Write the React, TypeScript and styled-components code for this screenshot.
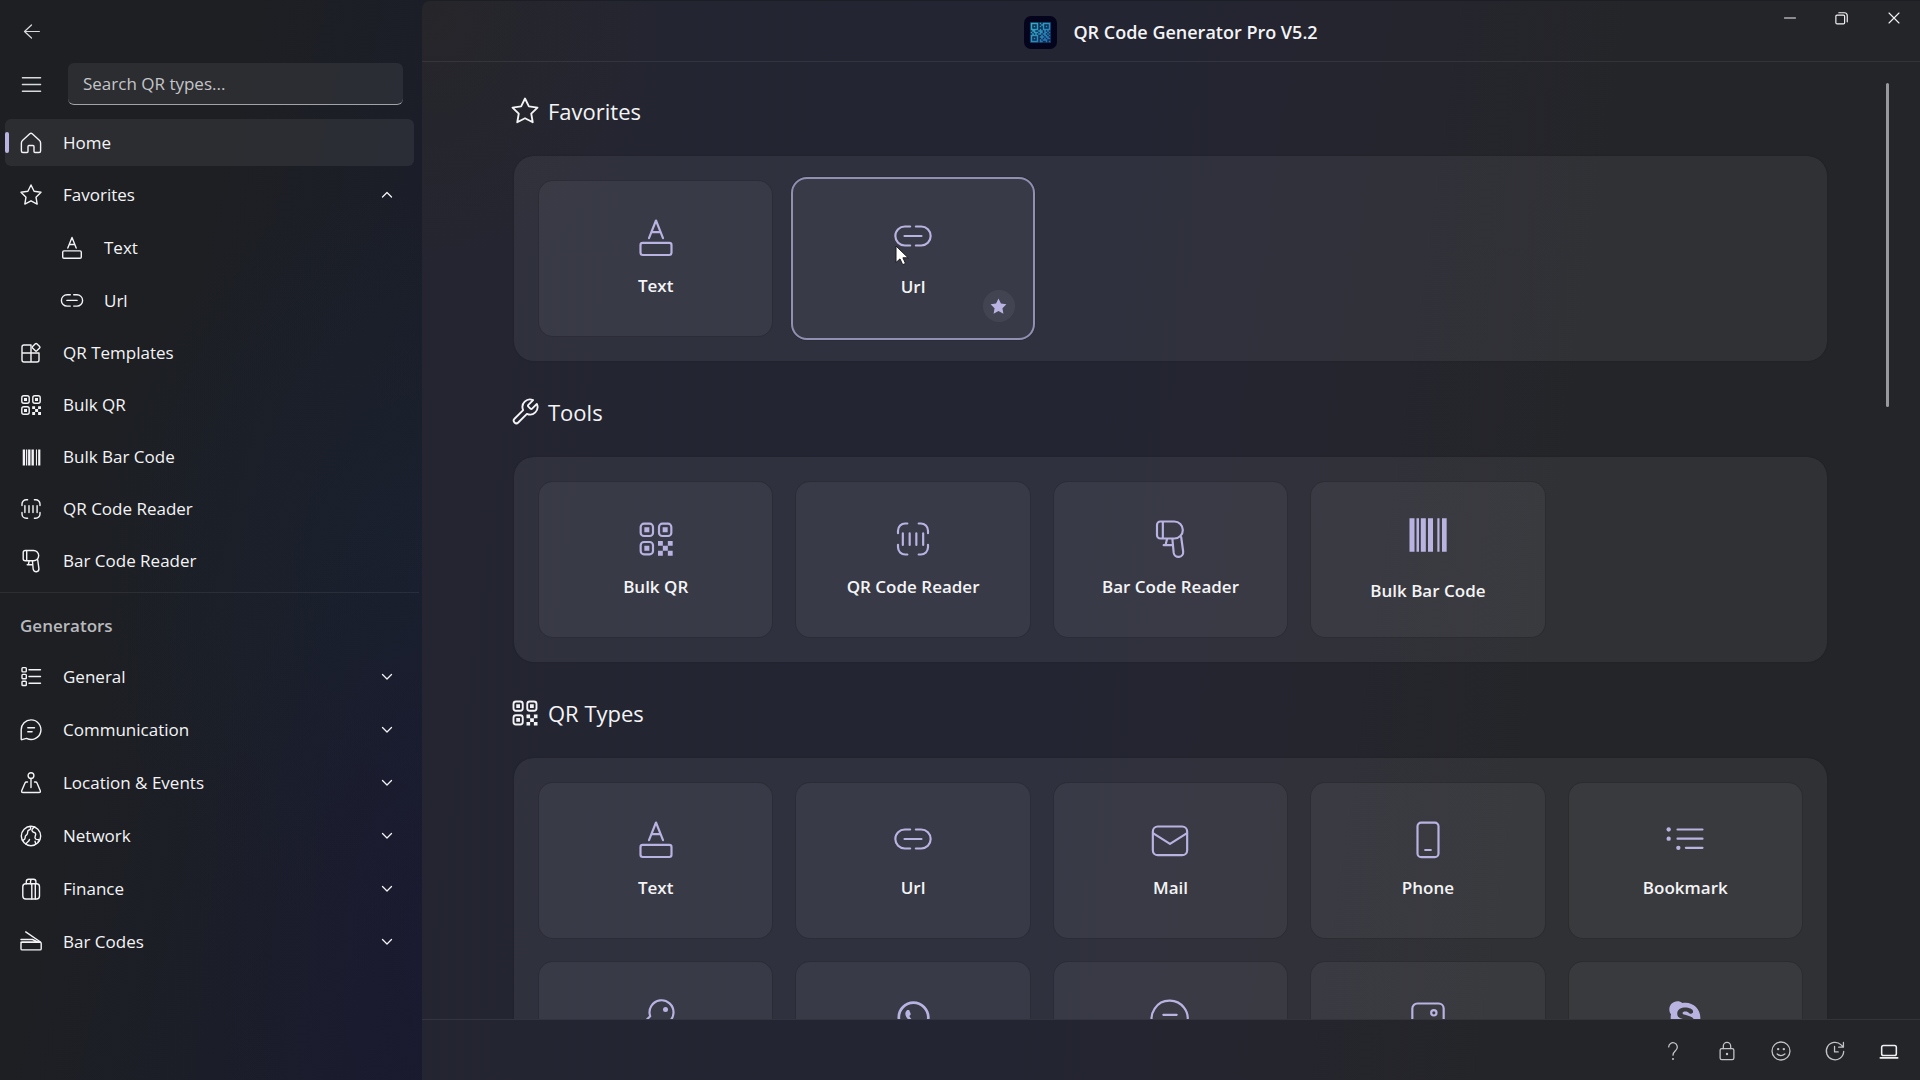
import React from "react";
import styled, { createGlobalStyle, css } from "styled-components";
import { FaSkype, FaWhatsapp } from "react-icons/fa";

const accent = "#b9b3e2";
const hairline = "rgba(255, 255, 255, 0.07)";

const GlobalStyle = createGlobalStyle`
  *, *::before, *::after { box-sizing: border-box; }
  body {
    margin: 0;
    background: #1c1e25;
    color: #f4f4f6;
    font-family: "Open Sans", "Noto Sans", sans-serif;
    font-size: 17px;
    line-height: 24px;
  }
  button, input { font: inherit; color: inherit; }
  button { background: none; border: 0; padding: 0; cursor: default; }
  ul { list-style: none; margin: 0; padding: 0; }
  h1, h2 { margin: 0; }
`;

/* ---------- icons ---------- */

const Svg = styled.svg<{ $size: number; $weight: number }>`
  display: block;
  flex: none;
  width: ${(p) => p.$size}px;
  height: ${(p) => p.$size}px;
  fill: none;
  stroke: currentColor;
  stroke-width: ${(p) => p.$weight};
  stroke-linecap: round;
  stroke-linejoin: round;

  .solid {
    fill: currentColor;
    stroke: none;
  }
`;

const star =
  "M12 2l3.09 6.26L22 9.27l-5 4.87 1.18 6.88L12 17.77l-6.18 3.25L7 14.14 2 9.27l6.91-1.01z";

const glyphs = {
  back: <path d="M21 12H4M12 4.5L4 12l8 7.5" />,
  menu: <path d="M2.5 5h19M2.5 12h19M2.5 19h19" />,
  home: (
    <path d="M10.8 2.8L3.7 9.2q-1.3 1.2-1.3 2.8v8a1.5 1.5 0 0 0 1.5 1.5H8a1 1 0 0 0 1-1v-5a1 1 0 0 1 1-1h4a1 1 0 0 1 1 1v5a1 1 0 0 0 1 1h4.1a1.5 1.5 0 0 0 1.5-1.5v-8q0-1.6-1.3-2.8L13.2 2.8q-1.2-1-2.4 0z" />
  ),
  star: <path d={star} />,
  starSolid: <path className="solid" d={star} />,
  text: (
    <>
      <path d="M7.8 12.1L12 1.5l4.2 10.6M9.3 8.5h5.4" />
      <rect x="2.7" y="14.9" width="18.6" height="7.3" rx="1.3" />
    </>
  ),
  link: (
    <path d="M10.3 5.7H7.1a5.7 5.7 0 0 0 0 11.4h3.2M13.7 5.7h3.2a5.7 5.7 0 0 1 0 11.4h-3.2M6.9 11.4h10.2" />
  ),
  templates: (
    <>
      <path d="M12 4H5a2 2 0 0 0-2 2v13a2 2 0 0 0 2 2h13a2 2 0 0 0 2-2v-7H3M12 4v17" />
      <rect x="14.1" y="3.3" width="6" height="6" rx="1" transform="rotate(45 17.1 6.3)" />
    </>
  ),
  qr: (
    <>
      <rect x="2.8" y="2.8" width="7.4" height="7.4" rx="2" />
      <rect x="13.8" y="2.8" width="7.4" height="7.4" rx="2" />
      <rect x="2.8" y="13.8" width="7.4" height="7.4" rx="2" />
      <path
        className="solid"
        d="M5 5h3v3H5zM16 5h3v3h-3zM5 16h3v3H5zM13.2 13.2h2.9v2.9h-2.9zM19.1 13.2H22v2.9h-2.9zM16.1 16.1h3v3h-3zM13.2 19.1h2.9V22h-2.9zM19.1 19.1H22V22h-2.9z"
      />
    </>
  ),
  bars: (
    <path
      className="solid"
      d="M.9 2h3v20h-3zM5.1 2h1.5v20H5.1zM7.7 2h3v20h-3zM12 2h3v20h-3zM17.6 2h1.3v20h-1.3zM20.4 2h2.8v20h-2.8z"
    />
  ),
  qrReader: (
    <path d="M3 8.5V7a4.3 4.3 0 0 1 4.3-4.3h1.3M15.4 2.7h1.3A4.3 4.3 0 0 1 21 7v1.5M21 15.5V17a4.3 4.3 0 0 1-4.3 4.3h-1.3M8.6 21.3H7.3A4.3 4.3 0 0 1 3 17v-1.5M5.9 8.6v7M10 8.6v7M14 8.6v7M18.1 8.6v7" />
  ),
  barReader: (
    <path d="M6.2 1.5h8.4a5.1 5.1 0 0 1 0 10.2H6.2a2 2 0 0 1-2-2V3.5a2 2 0 0 1 2-2zM7.7 1.5v10.2M13.4 11.7l.8 8.5a2.8 2.8 0 0 0 5.7-.7L18.7 10.8M10.3 11.7l-1 4M8.2 15.7h5.4" />
  ),
  list: (
    <>
      <rect x="3" y="2.6" width="4.3" height="4.3" rx=".8" />
      <rect x="3" y="9.4" width="4.3" height="4.3" rx=".8" />
      <rect x="3" y="16.2" width="4.3" height="4.3" rx=".8" />
      <path d="M10 4.7h11.5M10 11.5h11.5M10 18.3h11.5" />
    </>
  ),
  chat: (
    <path d="M12 1.9a9.8 9.8 0 1 1-4.4 18.5l-4.7 1.3a.6.6 0 0 1-.7-.7V11.7A9.8 9.8 0 0 1 12 1.9zM8.8 9.7h6.7M8.8 13.8h4.3" />
  ),
  location: (
    <>
      <circle cx="12" cy="4.6" r="2.9" />
      <path d="M12 7.5v9M8.5 11H7.4q-1 0-1.4 1l-3.2 7.6q-.7 1.9 1.2 1.9h16q1.9 0 1.2-1.9L18 12q-.4-1-1.4-1h-1.1" />
    </>
  ),
  globe: (
    <>
      <circle cx="12" cy="12" r="9.7" />
      <path d="M11 2.4c1 1.6 1 3-1 3.6-2.5.8-.5 3-2 4.500S6 11.500 6.200 13.500 4.500 16 3.500 16.500M7 20.300c.5-2 3-2.500 3.500-4.800M15.500 3c-2 1.500-3.500 3-2 4.500s3 .5 3.200 2.500-2 3.500 0 5 2.500 0 3.300.7-.2 1.800-1 2.300M16.500 20.300c.3-1.300-.2-2-.5-3" />
    </>
  ),
  bag: (
    <>
      <rect x="3.8" y="6.7" width="16.7" height="15.3" rx="3" />
      <path d="M7.3 6.7V4.5A2.3 2.3 0 0 1 9.6 2.2h5a2.3 2.3 0 0 1 2.3 2.3v2.2M11.5 6.7V4.5q0-1.5 1.3-2.3M12.8 6.7V22M16.3 6.7V22" />
    </>
  ),
  scanner: (
    <>
      <path d="M6.7 1.9L21.5 12M2 9.5h11.5l5.5 2.7M2 12.3h19" />
      <rect x="2" y="12.3" width="20.2" height="7.6" rx="1.2" />
    </>
  ),
  wrench: (
    <path d="M14.7 6.3a1 1 0 0 0 0 1.4l1.6 1.6a1 1 0 0 0 1.4 0l3.77-3.77a6 6 0 0 1-7.94 7.94l-6.91 6.91a2.12 2.12 0 0 1-3-3l6.91-6.91a6 6 0 0 1 7.94-7.94l-3.76 3.76z" />
  ),
  mail: (
    <>
      <rect x="1.7" y="3.9" width="20.6" height="17.2" rx="3" />
      <path d="M2 8l10 6.3L22 8" />
    </>
  ),
  phone: (
    <>
      <rect x="5.7" y="1.6" width="12.6" height="20.7" rx="2.2" />
      <path d="M10.3 18h3.4" />
    </>
  ),
  bookmark: (
    <>
      <path d="M7.5 5.7h15M7.5 11.2h15M12.5 16.7h10" />
      <circle className="solid" cx="2.2" cy="5.7" r="1.3" />
      <circle className="solid" cx="2.2" cy="11.2" r="1.3" />
      <circle className="solid" cx="8" cy="16.7" r="1.3" />
    </>
  ),
  key: (
    <>
      <path d="M8.5 10.3l-6.8 7V22h5v-2.8h3v-3h2.6l1.4-1.2A7.2 7.2 0 1 0 8.5 10.3z" />
      <circle className="solid" cx="17.7" cy="6.3" r="1.5" />
    </>
  ),
  message: (
    <path d="M12 1a10.7 10.7 0 1 1-4.8 20.3l-5 1.4a.6.6 0 0 1-.7-.7l.4-6A10.7 10.7 0 0 1 12 1zM8 9.5h8M8 14.5h5" />
  ),
  image: (
    <>
      <rect x="2.6" y="2.7" width="18.8" height="18.8" rx="3" />
      <circle cx="15.5" cy="8.3" r="1.6" />
      <path d="M4 20l8-7 8 7" />
    </>
  ),
  help: (
    <>
      <path d="M7.3 7.6a4.7 4.7 0 1 1 8.2 3.2C13.8 12.5 12 13.5 12 16.5" />
      <circle className="solid" cx="12" cy="20.6" r="1.1" />
    </>
  ),
  lock: (
    <>
      <rect x="4.5" y="9.3" width="15" height="12" rx="1.8" />
      <path d="M8 9.3V6.5a4 4 0 0 1 8 0v2.8" />
      <circle className="solid" cx="12" cy="15.3" r="1.3" />
    </>
  ),
  smile: (
    <>
      <circle cx="12" cy="12" r="9.8" />
      <path d="M7.8 15.2q4.2 3.6 8.4 0" />
      <circle className="solid" cx="8.9" cy="9.9" r="1.3" />
      <circle className="solid" cx="15.1" cy="9.9" r="1.3" />
    </>
  ),
  history: (
    <path d="M21.5 12.5A9.5 9.5 0 1 1 18.7 5.3l2.3 2.4M21.2 2.6v5.2H16M11.5 7v6h4" />
  ),
  laptop: (
    <>
      <rect x="4" y="6" width="16" height="11" rx="2" />
      <path d="M2.5 19.5h19" />
    </>
  ),
  chevronDown: <path d="M3 7l9 9 9-9" />,
  chevronUp: <path d="M3 16l9-9 9 9" />,
  minimize: <path d="M1 12h22" />,
  restore: (
    <path d="M3.5 7h11a2 2 0 0 1 2 2v11a2 2 0 0 1-2 2h-11a2 2 0 0 1-2-2V9a2 2 0 0 1 2-2zM6.5 3h9.500a5 5 0 0 1 5 5v10.500" />
  ),
  close: <path d="M2 2l20 20M22 2L2 22" />,
};

type GlyphName = keyof typeof glyphs;

function Icon({ name, size = 24, weight = 1.4 }: { name: GlyphName; size?: number; weight?: number }) {
  return (
    <Svg viewBox="0 0 24 24" $size={size} $weight={weight} aria-hidden="true">
      {glyphs[name]}
    </Svg>
  );
}

/* ---------- frame ---------- */

const Shell = styled.div`
  display: grid;
  grid-template-columns: 422px minmax(0, 1fr);
  height: 100vh;
  overflow: hidden;
`;

const Sidebar = styled.aside`
  display: flex;
  flex-direction: column;
  min-height: 0;
  overflow: hidden;
  background:
    radial-gradient(ellipse 260px 460px at 106% 88%, rgba(26, 26, 50, 0.8), rgba(26, 26, 50, 0) 100%),
    radial-gradient(ellipse 340px 380px at 100% 52%, rgba(25, 33, 46, 0.85), rgba(25, 33, 46, 0) 100%),
    linear-gradient(103deg, #1d1f23 0%, #1d1f23 38%, #1b1e28 68%, #1a1b2c 100%);
`;

const BackRow = styled.div`
  display: flex;
  height: 63px;
  padding-left: 5px;
`;

const SquareButton = styled.button`
  display: flex;
  align-items: center;
  justify-content: center;
  width: 53px;
  color: #d8d9dc;
`;

const SearchRow = styled.div`
  display: flex;
  gap: 10px;
  height: 42px;
  padding: 0 19px 0 5px;
`;

const SearchInput = styled.input`
  flex: 1;
  min-width: 0;
  padding: 1px 15px 0;
  border: 0;
  border-bottom: 1px solid #a2a3a8;
  border-radius: 6px;
  background: rgba(255, 255, 255, 0.065);
  outline: 0;

  &::placeholder {
    color: #c4c5c9;
    opacity: 1;
  }
`;

const Nav = styled.nav`
  padding-top: 14px;
`;

const NavList = styled.ul<{ $nested?: boolean; $loose?: boolean }>`
  display: grid;
  gap: ${(p) => (p.$nested || p.$loose ? 6 : 5)}px;
  padding: ${(p) => (p.$nested ? "6px 0 0" : "0 8px 0 5px")};
`;

const NavButton = styled.button<{ $active?: boolean; $nested?: boolean }>`
  position: relative;
  display: flex;
  align-items: center;
  gap: 20px;
  width: 100%;
  height: 47px;
  padding: 1px 21px 0 ${(p) => (p.$nested ? 55 : 14)}px;
  border-radius: 6px;
  text-align: left;

  ${(p) =>
    p.$active &&
    css`
      background: rgba(255, 255, 255, 0.065);

      &::before {
        content: "";
        position: absolute;
        left: 0;
        top: 13px;
        width: 4px;
        height: 21px;
        border-radius: 2px;
        background: ${accent};
      }
    `}
`;

const NavGlyph = styled.span`
  display: flex;
  flex: none;
  justify-content: center;
  width: 24px;
`;

const NavText = styled.span`
  flex: 1;
`;

const Divider = styled.hr`
  width: 419px;
  height: 1px;
  margin: 8px 0;
  border: 0;
  background: ${hairline};
`;

const GroupLabel = styled.h2`
  padding: 1px 0 0 20px;
  margin-bottom: 4px;
  color: #b9babe;
  font-size: 17px;
  font-weight: 600;
  line-height: 47px;
`;

/* ---------- main column ---------- */

const Main = styled.main`
  position: relative;
  display: flex;
  flex-direction: column;
  min-height: 0;
  margin-top: 1px;
  border-top-left-radius: 8px;
  background:
    radial-gradient(ellipse 260px 300px at 0% 0%, rgba(38, 38, 41, 0.9), rgba(38, 38, 41, 0) 100%),
    linear-gradient(98deg, #242531 0%, #232532 44%, #25252e 60%, #242528 76%, #242528 100%);
`;

const TitleBar = styled.header`
  display: grid;
  grid-template-columns: 1fr auto 1fr;
  align-items: center;
  height: 61px;
  border-bottom: 1px solid ${hairline};
`;

const Brand = styled.div`
  display: flex;
  grid-column: 2;
  align-items: center;
  gap: 16px;
  padding-top: 2px;
`;

const Title = styled.h1`
  font-size: 18px;
  font-weight: 600;
  line-height: 24px;
`;

const Logo = styled.svg`
  width: 33px;
  height: 33px;
`;

const WindowControls = styled.div`
  display: flex;
  align-self: start;
  justify-self: end;
`;

const WindowButton = styled.button`
  display: flex;
  align-items: center;
  justify-content: center;
  width: 52px;
  height: 33px;
`;

const Content = styled.div`
  flex: 1;
  min-height: 0;
  overflow-y: auto;
  scrollbar-width: none;
  padding: 30px 93px 30px 88px;
`;

const ScrollThumb = styled.div`
  position: absolute;
  top: 82px;
  right: 31px;
  width: 3px;
  height: 324px;
  border-radius: 2px;
  background: #98999c;
`;

const Section = styled.section`
  margin-bottom: 32px;
`;

const SectionHeading = styled.h2`
  display: flex;
  align-items: center;
  gap: 8px;
  height: 38px;
  margin-bottom: 26px;
  font-size: 22px;
  font-weight: 400;
  line-height: 32px;
`;

const Panel = styled.div`
  display: grid;
  grid-template-columns: repeat(5, minmax(0, 1fr));
  gap: 24px;
  margin-left: 4px;
  padding: 25px;
  border-radius: 20px;
  background: rgba(255, 255, 255, 0.06);
  box-shadow: 0 0 2px rgba(0, 0, 0, 0.2);
`;

const CardButton = styled.button<{ $raised?: boolean }>`
  position: relative;
  display: flex;
  flex-direction: column;
  align-items: center;
  justify-content: center;
  gap: 16px;
  height: 155px;
  padding-bottom: 2px;
  border-radius: 14px;
  background: rgba(255, 255, 255, 0.048);
  box-shadow: 0 0 0 1px rgba(0, 0, 0, 0.1);
  font-weight: 600;

  ${(p) =>
    p.$raised &&
    css`
      gap: 18px;
      height: 163px;
      margin: -4px -5px;
      border: 2px solid #918fb2;
      border-radius: 16px;
    `}
`;

const CardGlyph = styled.span<{ $tall?: boolean }>`
  display: flex;
  justify-content: center;
  height: ${(p) => (p.$tall ? 48 : 40)}px;
  color: ${accent};
`;

const CardLabel = styled.span`
  min-height: 24px;
`;

const FavoriteBadge = styled.span`
  position: absolute;
  right: 18px;
  bottom: 16px;
  display: flex;
  align-items: center;
  justify-content: center;
  width: 32px;
  height: 32px;
  border-radius: 50%;
  background: rgba(255, 255, 255, 0.055);
  color: ${accent};
`;

const Pointer = styled.svg`
  position: absolute;
  left: 102px;
  top: 66px;
  width: 15px;
  height: 22px;
`;

const StatusBar = styled.footer`
  display: flex;
  align-items: center;
  justify-content: flex-end;
  flex: none;
  height: 61px;
  padding: 2px 4px 0 0;
  border-top: 1px solid ${hairline};
`;

const StatusButton = styled.button<{ $bright?: boolean }>`
  display: flex;
  align-items: center;
  justify-content: center;
  width: 54px;
  height: 48px;
  color: ${(p) => (p.$bright ? "#f0f0f2" : "#c3c4c7")};
`;

/* ---------- parts ---------- */

interface NavItemProps {
  icon: GlyphName;
  label: string;
  active?: boolean;
  nested?: boolean;
  expanded?: boolean;
  children?: React.ReactNode;
}

function NavItem({ icon, label, active, nested, expanded, children }: NavItemProps) {
  return (
    <li>
      <NavButton
        type="button"
        $active={active}
        $nested={nested}
        aria-current={active ? "page" : undefined}
        aria-expanded={expanded}
      >
        <NavGlyph>
          <Icon name={icon} size={icon === "bars" ? 19 : 24} />
        </NavGlyph>
        <NavText>{label}</NavText>
        {expanded !== undefined && (
          <Icon name={expanded ? "chevronUp" : "chevronDown"} size={12} weight={2.6} />
        )}
      </NavButton>
      {children}
    </li>
  );
}

interface CardData {
  name: string;
  label?: string;
  icon?: GlyphName;
  brand?: React.ReactNode;
  raised?: boolean;
}

function Card({ name, label, icon, brand, raised }: CardData) {
  return (
    <CardButton type="button" $raised={raised} aria-label={name}>
      <CardGlyph $tall={icon === "bars"}>{icon ? <Icon name={icon} size={40} weight={1.3} /> : brand}</CardGlyph>
      <CardLabel>{label}</CardLabel>
      {raised && (
        <>
          <FavoriteBadge>
            <Icon name="starSolid" size={19} />
          </FavoriteBadge>
          <Pointer viewBox="0 0 15 22" aria-hidden="true">
            <path
              d="M1 1v16.500l4-3.600 2.700 5.800 2.800-1.300-2.600-5.600h5.300z"
              fill="#fff"
              stroke="#1b1b22"
              strokeWidth="1"
            />
          </Pointer>
        </>
      )}
    </CardButton>
  );
}

function CardSection({ title, icon, cards }: { title: string; icon: GlyphName; cards: CardData[] }) {
  return (
    <Section>
      <SectionHeading>
        <Icon name={icon} size={30} weight={1.5} />
        {title}
      </SectionHeading>
      <Panel>
        {cards.map((card) => (
          <Card key={card.name} {...card} />
        ))}
      </Panel>
    </Section>
  );
}

const logoRows = [
  "1111101011111",
  "1000100110001",
  "1010101010101",
  "1000100010001",
  "1111101011111",
  "0110011101010",
  "1011101101101",
  "0101011011010",
  "1111100101101",
  "1000101110110",
  "1010100101011",
  "1000101011100",
  "1111101100101",
];

function AppLogo() {
  return (
    <Logo viewBox="0 0 33 33" aria-hidden="true">
      <defs>
        <linearGradient id="logoInk" x1="0" y1="0" x2="1" y2="1">
          <stop offset="0" stopColor="#35b3c6" />
          <stop offset="1" stopColor="#2369b4" />
        </linearGradient>
      </defs>
      <rect width="33" height="33" rx="7" fill="#04041c" />
      <rect x="6" y="6" width="21" height="21" fill="#0c2c50" />
      <path
        fill="url(#logoInk)"
        d={logoRows
          .flatMap((row, y) =>
            [...row].map((cell, x) => (cell === "1" ? `M${6.75 + x * 1.5} ${6.75 + y * 1.5}h1.5v1.5h-1.5z` : ""))
          )
          .join("")}
      />
    </Logo>
  );
}

const favorites: CardData[] = [
  { name: "Text", label: "Text", icon: "text" },
  { name: "Url", label: "Url", icon: "link", raised: true },
];

const tools: CardData[] = [
  { name: "Bulk QR", label: "Bulk QR", icon: "qr" },
  { name: "QR Code Reader", label: "QR Code Reader", icon: "qrReader" },
  { name: "Bar Code Reader", label: "Bar Code Reader", icon: "barReader" },
  { name: "Bulk Bar Code", label: "Bulk Bar Code", icon: "bars" },
];

const qrTypes: CardData[] = [
  { name: "Text", label: "Text", icon: "text" },
  { name: "Url", label: "Url", icon: "link" },
  { name: "Mail", label: "Mail", icon: "mail" },
  { name: "Phone", label: "Phone", icon: "phone" },
  { name: "Bookmark", label: "Bookmark", icon: "bookmark" },
  { name: "Password", icon: "key" },
  { name: "WhatsApp", brand: <FaWhatsapp size={37} /> },
  { name: "Message", icon: "message" },
  { name: "Image", icon: "image" },
  { name: "Skype", brand: <FaSkype size={37} /> },
];

const generators: { icon: GlyphName; label: string }[] = [
  { icon: "list", label: "General" },
  { icon: "chat", label: "Communication" },
  { icon: "location", label: "Location & Events" },
  { icon: "globe", label: "Network" },
  { icon: "bag", label: "Finance" },
  { icon: "scanner", label: "Bar Codes" },
];

const statusActions: { icon: GlyphName; label: string }[] = [
  { icon: "help", label: "Help" },
  { icon: "lock", label: "Privacy" },
  { icon: "smile", label: "Feedback" },
  { icon: "history", label: "History" },
  { icon: "laptop", label: "Display" },
];

export default function App() {
  return (
    <>
      <GlobalStyle />
      <Shell>
        <Sidebar>
          <BackRow>
            <SquareButton type="button" aria-label="Back">
              <Icon name="back" size={21} />
            </SquareButton>
          </BackRow>
          <SearchRow>
            <SquareButton type="button" aria-label="Menu">
              <Icon name="menu" size={23} />
            </SquareButton>
            <SearchInput type="text" aria-label="Search QR types" placeholder="Search QR types..." />
          </SearchRow>
          <Nav aria-label="Main">
            <NavList>
              <NavItem icon="home" label="Home" active />
              <NavItem icon="star" label="Favorites" expanded>
                <NavList $nested>
                  <NavItem icon="text" label="Text" nested />
                  <NavItem icon="link" label="Url" nested />
                </NavList>
              </NavItem>
              <NavItem icon="templates" label="QR Templates" />
              <NavItem icon="qr" label="Bulk QR" />
              <NavItem icon="bars" label="Bulk Bar Code" />
              <NavItem icon="qrReader" label="QR Code Reader" />
              <NavItem icon="barReader" label="Bar Code Reader" />
            </NavList>
            <Divider />
            <GroupLabel>Generators</GroupLabel>
            <NavList $loose>
              {generators.map((item) => (
                <NavItem key={item.label} {...item} expanded={false} />
              ))}
            </NavList>
          </Nav>
        </Sidebar>
        <Main>
          <TitleBar>
            <Brand>
              <AppLogo />
              <Title>QR Code Generator Pro V5.2</Title>
            </Brand>
            <WindowControls>
              <WindowButton type="button" aria-label="Minimize">
                <Icon name="minimize" size={12} weight={2} />
              </WindowButton>
              <WindowButton type="button" aria-label="Restore">
                <Icon name="restore" size={14} weight={2} />
              </WindowButton>
              <WindowButton type="button" aria-label="Close">
                <Icon name="close" size={12} weight={2.2} />
              </WindowButton>
            </WindowControls>
          </TitleBar>
          <Content>
            <CardSection title="Favorites" icon="star" cards={favorites} />
            <CardSection title="Tools" icon="wrench" cards={tools} />
            <CardSection title="QR Types" icon="qr" cards={qrTypes} />
          </Content>
          <ScrollThumb />
          <StatusBar>
            {statusActions.map((action) => (
              <StatusButton
                key={action.label}
                type="button"
                aria-label={action.label}
                $bright={action.icon === "laptop"}
              >
                <Icon name={action.icon} size={22} weight={action.icon === "laptop" ? 1.7 : 1.4} />
              </StatusButton>
            ))}
          </StatusBar>
        </Main>
      </Shell>
    </>
  );
}
